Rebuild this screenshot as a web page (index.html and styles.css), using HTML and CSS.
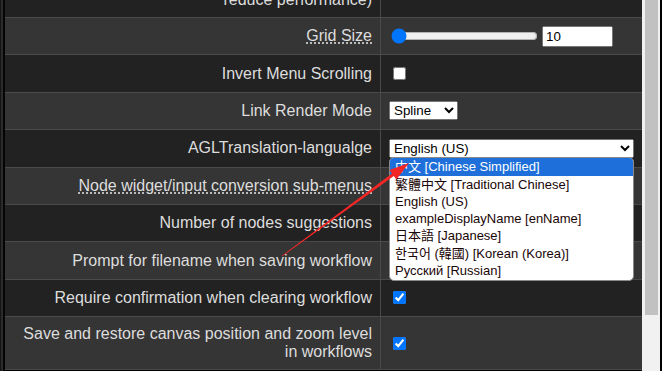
FILE: index.html
```html
<!DOCTYPE html>
<html lang="en">
<head>
    <meta charset="UTF-8">
    <meta name="viewport" content="width=device-width, initial-scale=1.0">
    <title>Settings</title>
    <link rel="stylesheet" href="styles.css">
</head>
<body>
<div class="edge"><span class="e1"></span><span class="e2"></span><span class="e3"></span></div>
<div class="panel">
    <div class="rows">
        <div class="row tall">
            <div class="label">Enable DOM element clipping (enabling may reduce performance)</div>
            <div class="value"><input type="checkbox" checked></div>
        </div>
        <div class="row">
            <div class="label"><span class="tip">Grid Size</span></div>
            <div class="value">
                <input class="slider" type="range" min="10" max="100" value="10">
                <input class="num" type="number" value="10">
            </div>
        </div>
        <div class="row">
            <div class="label">Invert Menu Scrolling</div>
            <div class="value"><input type="checkbox"></div>
        </div>
        <div class="row">
            <div class="label">Link Render Mode</div>
            <div class="value">
                <select class="small">
                    <option>Spline</option>
                    <option>Linear</option>
                    <option>Straight</option>
                </select>
            </div>
        </div>
        <div class="row">
            <div class="label">AGLTranslation-langualge</div>
            <div class="value menu-host">
                <select class="wide">
                    <option>English (US)</option>
                </select>
                <div class="dropdown">
                    <div class="opt cjk active">中文 [Chinese Simplified]</div>
                    <div class="opt cjk">繁體中文 [Traditional Chinese]</div>
                    <div class="opt">English (US)</div>
                    <div class="opt">exampleDisplayName [enName]</div>
                    <div class="opt cjk">日本語 [Japanese]</div>
                    <div class="opt cjk">한국어 (韓國) [Korean (Korea)]</div>
                    <div class="opt">Русский [Russian]</div>
                </div>
            </div>
        </div>
        <div class="row">
            <div class="label"><span class="tip">Node widget/input conversion sub-menus</span></div>
            <div class="value"><input type="checkbox" checked></div>
        </div>
        <div class="row">
            <div class="label">Number of nodes suggestions</div>
            <div class="value"><input class="num" type="number" value="5"></div>
        </div>
        <div class="row">
            <div class="label">Prompt for filename when saving workflow</div>
            <div class="value"><input type="checkbox" checked></div>
        </div>
        <div class="row">
            <div class="label">Require confirmation when clearing workflow</div>
            <div class="value"><input type="checkbox" checked></div>
        </div>
        <div class="row tall">
            <div class="label">Save and restore canvas position and zoom level in workflows</div>
            <div class="value"><input type="checkbox" checked></div>
        </div>
    </div>
</div>
<div class="scrollbar"><div class="thumb"></div></div>
<div class="edge-right"></div>

<svg class="arrow" width="662" height="371" viewBox="0 0 662 371">
    <polygon points="281.76,255.68 392.0,173.6 389.4,170.0 409,163 396.4,179.6 393.8,176.0 282.24,256.32" fill="#f32626"/>
</svg>
</body>
</html>
```

FILE: styles.css
```css
html, body {
    margin: 0;
    height: 371px;
    overflow: hidden;
    background: #000;
}

body {
    display: flex;
    font-family: "Liberation Sans", Arial, "Noto Sans CJK SC", sans-serif;
    font-size: 16px;
    color: #dddddd;
}

.edge {
    display: flex;
    flex: none;
}

.edge span {
    display: block;
}

.e1 {
    width: 1px;
    background: #141414;
}

.e2 {
    width: 2px;
    background: #2b2b2b;
}

.e3 {
    width: 2px;
    background: #050505;
}

.panel {
    width: 637px;
    flex: none;
    overflow: hidden;
}

.rows {
    margin-top: -35px;
}

.row {
    display: grid;
    grid-template-columns: 376px 1fr;
    box-sizing: border-box;
    min-height: 37.4px;
    border-bottom: 1px solid #4a4a4a;
    background: #222222;
}

.row:nth-child(even) {
    background: #353535;
}

.row.tall {
    min-height: 53px;
}

.label {
    border-right: 1px solid #4a4a4a;
    padding: 0 8px;
    line-height: 18px;
    text-align: right;
    display: flex;
    align-items: center;
    justify-content: flex-end;
}

.tip {
    text-decoration: underline dotted;
    text-underline-offset: 2px;
}

.value {
    padding: 0 8px;
    display: flex;
    align-items: center;
    gap: 2px;
}

.value input[type='checkbox'] {
    margin: 3px 3px 3px 4px;
}

.slider {
    width: 147px;
    margin: 2px;
}

.num {
    width: 71px;
    height: 21px;
    box-sizing: border-box;
    font-family: "Liberation Sans", Arial, sans-serif;
    font-size: 13.33px;
}

select {
    font-family: "Liberation Sans", Arial, sans-serif;
    font-size: 13.33px;
    height: 19px;
    box-sizing: border-box;
}

.small {
    width: 69px;
}

.wide {
    width: 245px;
}

.menu-host {
    position: relative;
}

.dropdown {
    position: absolute;
    left: 8px;
    top: 27px;
    width: 245px;
    box-sizing: border-box;
    background: #fff;
    border: 1px solid #8a8a8a;
    border-radius: 5px;
    overflow: hidden;
    z-index: 5;
    font-family: "Liberation Sans", Arial, "Noto Sans CJK SC", sans-serif;
    font-size: 13px;
    color: #1a0505;
}

.opt {
    padding-left: 5px;
    line-height: 16.5px;
    white-space: nowrap;
}

.opt.cjk {
    line-height: 18px;
}

.opt.active {
    background: #1e6fd9;
    color: #fff;
}

.scrollbar {
    width: 18px;
    flex: none;
    background: #f1f1f1;
    box-sizing: border-box;
    padding: 0 2px 0 3px;
}

.thumb {
    height: 315px;
    background: #c1c1c1;
}

.edge-right {
    width: 2px;
    flex: none;
    background: #000;
}

.arrow {
    position: absolute;
    left: 0;
    top: 0;
    pointer-events: none;
    z-index: 10;
}
```
